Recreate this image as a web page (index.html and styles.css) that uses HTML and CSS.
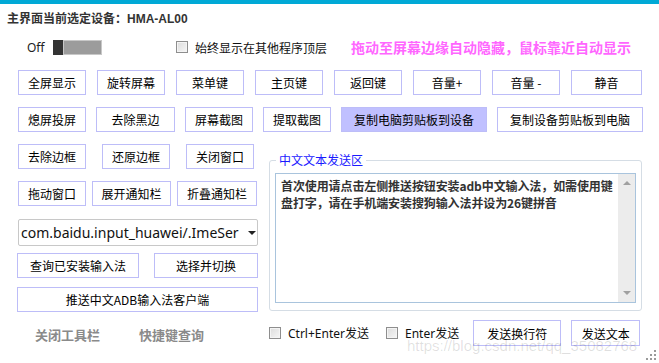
FILE: index.html
```html
<!DOCTYPE html>
<html lang="zh-CN">
<head>
    <meta charset="UTF-8">
    <title>主界面</title>
    <link rel="stylesheet" href="styles.css">
</head>
<body>
    <div class="topbar"></div>
    <div class="header">主界面当前选定设备：<span class="device">HMA-AL00</span></div>

    <div class="options">
        <span class="off-label">Off</span>
        <span class="toggle"><span class="knob"></span><span class="track"></span></span>
        <label class="check top-check"><span class="box"></span>始终显示在其他程序顶层</label>
        <span class="hint">拖动至屏幕边缘自动隐藏，鼠标靠近自动显示</span>
    </div>

    <div class="row row-keys">
        <button class="btn w68">全屏显示</button>
        <button class="btn w68">旋转屏幕</button>
        <button class="btn w68">菜单键</button>
        <button class="btn w68">主页键</button>
        <button class="btn w68">返回键</button>
        <button class="btn w68">音量+</button>
        <button class="btn w68">音量 -</button>
        <button class="btn w71">静音</button>
    </div>

    <div class="row row-tools">
        <button class="btn w68">熄屏投屏</button>
        <button class="btn w79">去除黑边</button>
        <button class="btn w68">屏幕截图</button>
        <button class="btn w68">提取截图</button>
        <button class="btn w146 active">复制电脑剪贴板到设备</button>
        <button class="btn w146">复制设备剪贴板到电脑</button>
    </div>

    <div class="section">
        <div class="left">
            <div class="row row-win">
                <button class="btn w68">去除边框</button>
                <button class="btn w68">还原边框</button>
                <button class="btn w68">关闭窗口</button>
            </div>
            <div class="row row-notify">
                <button class="btn w68">拖动窗口</button>
                <button class="btn w79">展开通知栏</button>
                <button class="btn w80">折叠通知栏</button>
            </div>
            <div class="combo">
                <span class="combo-text">com.baidu.input_huawei/.ImeSer</span>
                <span class="combo-arrow"></span>
            </div>
            <div class="row row-ime">
                <button class="btn w122">查询已安装输入法</button>
                <button class="btn w104">选择并切换</button>
            </div>
            <button class="btn full">推送中文ADB输入法客户端</button>
            <div class="links">
                <span class="link">关闭工具栏</span>
                <span class="link">快捷键查询</span>
            </div>
        </div>

        <div class="right">
            <div class="group">
                <span class="group-title">中文文本发送区</span>
                <div class="textbox">
                    <div class="textbox-text">首次使用请点击左侧推送按钮安装adb中文输入法，如需使用键盘打字，请在手机端安装搜狗输入法并设为26键拼音</div>
                    <div class="scrollbar">
                        <span class="arrow-up"></span>
                        <span class="arrow-down"></span>
                    </div>
                </div>
            </div>
            <div class="send-row">
                <label class="check"><span class="box"></span>Ctrl+Enter发送</label>
                <label class="check enter-check"><span class="box"></span>Enter发送</label>
                <button class="btn w88">发送换行符</button>
                <button class="btn w69">发送文本</button>
            </div>
        </div>
    </div>

    <div class="watermark">https://blog.csdn.net/qq_35082768</div>
    <svg class="grip" width="12" height="12" viewBox="0 0 12 12">
        <rect x="9" y="1" width="2" height="2" fill="#9a9a9a"/>
        <rect x="5" y="5" width="2" height="2" fill="#9a9a9a"/>
        <rect x="9" y="5" width="2" height="2" fill="#9a9a9a"/>
        <rect x="1" y="9" width="2" height="2" fill="#9a9a9a"/>
        <rect x="5" y="9" width="2" height="2" fill="#9a9a9a"/>
        <rect x="9" y="9" width="2" height="2" fill="#9a9a9a"/>
    </svg>
</body>
</html>
```

FILE: styles.css
```css
body {
    margin: 0;
    width: 659px;
    height: 363px;
    position: relative;
    overflow: hidden;
    background-color: #ffffff;
    font-family: "Noto Sans CJK SC", "Noto Sans", sans-serif;
    font-size: 12px;
    color: #000;
}
.topbar {
    height: 4px;
    background-color: #00a9d6;
}
.header {
    height: 28px;
    line-height: 28px;
    padding-left: 7px;
    font-weight: bold;
    color: #333;
    font-size: 12px;
}
.device {
    font-family: "Liberation Sans", sans-serif;
    font-size: 12px;
}
.options {
    height: 30px;
    display: flex;
    align-items: center;
    padding-left: 27px;
}
.off-label {
    font-family: "Noto Sans", sans-serif;
    font-size: 12px;
    color: #222;
    width: 26px;
}
.toggle {
    display: flex;
    height: 15px;
}
.knob {
    width: 10px;
    background-color: #333;
}
.track {
    width: 37px;
    background-color: #9c9c9c;
    border: 1px solid #c8c8c8;
}
.check {
    display: flex;
    align-items: center;
    gap: 7px;
    font-size: 12px;
    color: #111;
}
.box {
    width: 10px;
    height: 10px;
    border: 1px solid #8e8e8e;
    background: linear-gradient(135deg, #dcdcdc, #f6f6f6);
    box-shadow: inset 0 0 0 1px #f4f4f4;
}
.top-check {
    margin-left: 74px;
}
.hint {
    margin-left: 24px;
    font-weight: bold;
    font-size: 14px;
    color: #ff66ff;
}
.row {
    display: flex;
    gap: 10px;
}
.btn {
    height: 25px;
    padding: 0;
    border: 1px solid #bdbdf8;
    background-color: #fff;
    font-family: "Noto Sans CJK SC", "Noto Sans", sans-serif;
    font-size: 12px;
    color: #000;
    white-space: nowrap;
}
.btn.active {
    background-color: #c0c0ff;
}
.w68 { width: 68px; }
.w69 { width: 69px; }
.w71 { width: 71px; }
.w79 { width: 79px; }
.w80 { width: 80px; }
.w88 { width: 88px; }
.w104 { width: 104px; }
.w122 { width: 122px; }
.w146 { width: 146px; }
.row-keys {
    margin-top: 8px;
    padding-left: 18px;
    gap: 11px;
}
.row-tools {
    margin-top: 12px;
    padding-left: 18px;
}
.section {
    display: flex;
    margin-top: 12px;
    padding-left: 17px;
}
.left {
    width: 241px;
    display: flex;
    flex-direction: column;
}
.row-win {
    padding-left: 1px;
    gap: 16px;
}
.row-notify {
    margin-top: 12px;
    padding-left: 1px;
    gap: 6px;
}
.combo {
    margin-top: 13px;
    margin-left: 1px;
    height: 25px;
    border: 1px solid #c8c8c8;
    border-radius: 2px;
    display: flex;
    align-items: center;
    padding-left: 2px;
}
.combo-text {
    font-family: "Noto Sans", sans-serif;
    font-size: 14px;
    width: 218px;
    overflow: hidden;
    white-space: nowrap;
    color: #111;
}
.combo-arrow {
    width: 0;
    height: 0;
    margin-left: 9px;
    border-left: 4px solid transparent;
    border-right: 4px solid transparent;
    border-top: 4px solid #222;
}
.row-ime {
    margin-top: 7px;
    gap: 15px;
}
.full {
    margin-top: 9px;
    width: 241px;
}
.links {
    display: flex;
    height: 24px;
    align-items: center;
    margin-top: 10px;
    padding-left: 18px;
    gap: 39px;
}
.link {
    font-weight: bold;
    font-size: 13px;
    color: #8a8a8a;
}
.right {
    margin-left: 11px;
    width: 373px;
}
.group {
    position: relative;
    margin-top: 16px;
    border: 1px solid #d5dde5;
    border-radius: 3px;
    padding: 12px 0 0 5px;
    box-sizing: border-box;
    height: 151px;
}
.group-title {
    position: absolute;
    top: -9px;
    left: 6px;
    padding: 0 3px;
    background-color: #fff;
    color: #1a1aff;
    font-size: 12px;
    line-height: 16px;
}
.textbox {
    width: 361px;
    height: 130px;
    box-sizing: border-box;
    border: 1px solid #a9c4dd;
    display: flex;
}
.textbox-text {
    flex: 1;
    padding: 3px 0 0 5px;
    font-weight: bold;
    color: #333;
    font-size: 12px;
    line-height: 17px;
    letter-spacing: -0.1px;
}
.scrollbar {
    width: 17px;
    flex-shrink: 0;
    background-color: #ececec;
    display: flex;
    flex-direction: column;
    justify-content: space-between;
    align-items: center;
    padding: 7px 0;
}
.arrow-up {
    width: 0;
    height: 0;
    border-left: 4px solid transparent;
    border-right: 4px solid transparent;
    border-bottom: 4px solid #a0a0a0;
}
.arrow-down {
    width: 0;
    height: 0;
    border-left: 4px solid transparent;
    border-right: 4px solid transparent;
    border-top: 4px solid #a0a0a0;
}
.send-row {
    display: flex;
    align-items: center;
    margin-top: 9px;
    height: 26px;
}
.send-row .check {
    font-family: "Noto Sans", "Noto Sans CJK SC", sans-serif;
}
.enter-check {
    margin-left: 17px;
}
.send-row .btn {
    height: 26px;
}
.send-row .w88 {
    margin-left: 14px;
}
.send-row .w69 {
    margin-left: 10px;
}
.watermark {
    position: absolute;
    left: 407px;
    top: 337px;
    font-family: "Liberation Sans", sans-serif;
    font-size: 15px;
    color: rgba(0, 0, 0, 0.13);
    white-space: nowrap;
}
.grip {
    position: absolute;
    right: 2px;
    bottom: 2px;
}
```
